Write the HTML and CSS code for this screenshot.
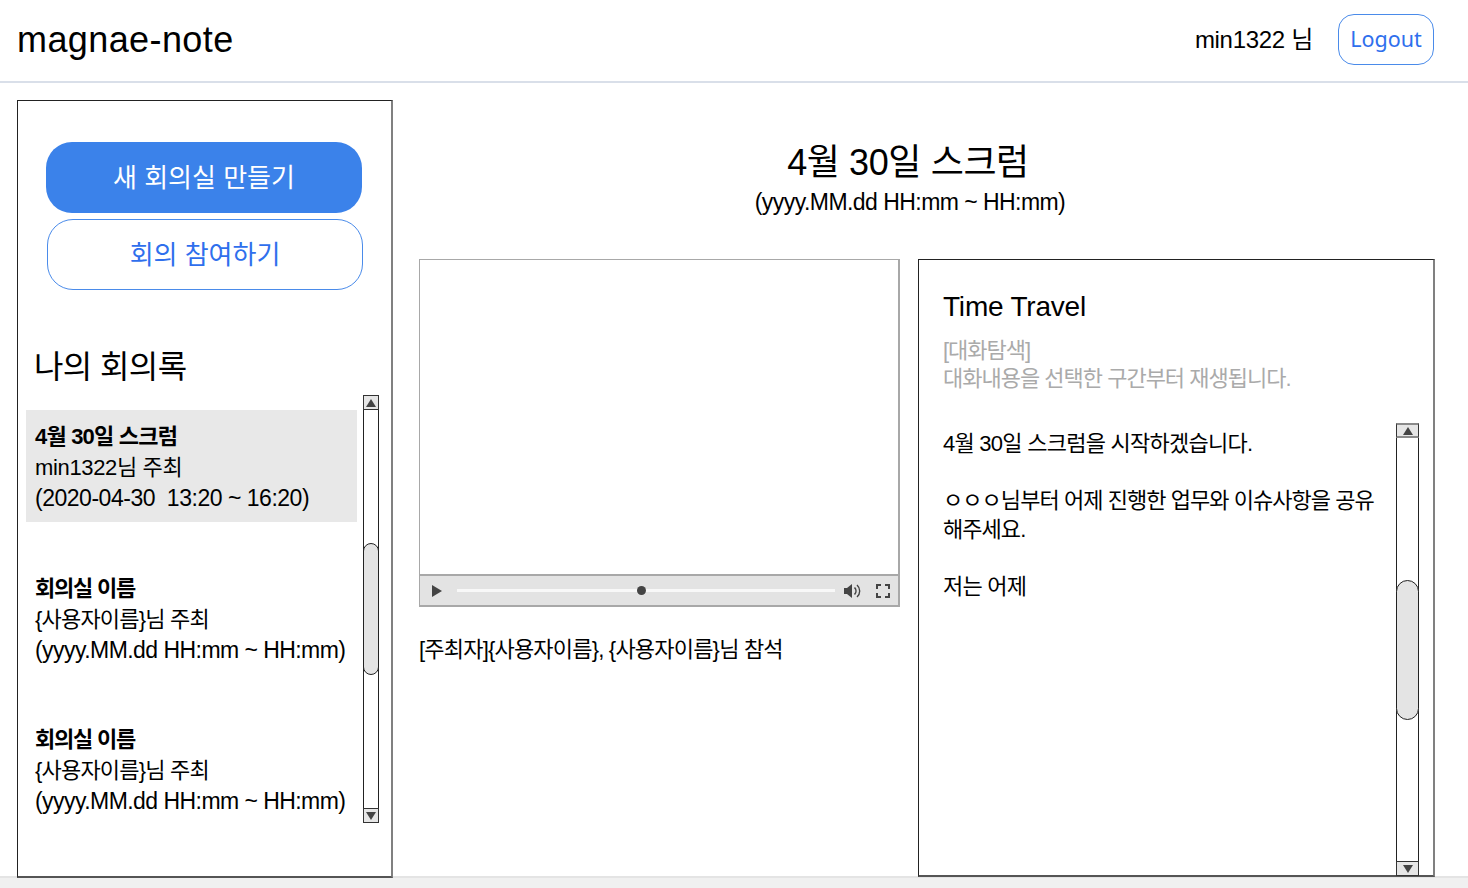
FILE: index.html
```html
<!DOCTYPE html>
<html lang="ko">
<head>
    <meta charset="UTF-8">
    <meta name="viewport" content="width=device-width, initial-scale=1.0">
    <title>magnae-note</title>
    <link rel="stylesheet" href="styles.css">
</head>
<body>
    <header class="topbar">
        <h1 class="logo">magnae-note</h1>
        <div class="user-box">
            <span class="user-name">min1322 님</span>
            <button class="logout-btn">Logout</button>
        </div>
    </header>
    <div class="page">
        <aside class="sidebar">
            <button class="btn btn-primary">새 회의실 만들기</button>
            <button class="btn btn-outline">회의 참여하기</button>
            <h2 class="side-title">나의 회의록</h2>
            <div class="list-wrap">
                <ul class="meeting-list">
                    <li class="meeting active">
                        <strong>4월 30일 스크럼</strong>
                        <span class="host">min1322님 주최</span>
                        <span>(2020-04-30&nbsp; 13:20 ~ 16:20)</span>
                    </li>
                    <li class="meeting">
                        <strong>회의실 이름</strong>
                        <span class="host">{사용자이름}님 주최</span>
                        <span>(yyyy.MM.dd HH:mm ~ HH:mm)</span>
                    </li>
                    <li class="meeting">
                        <strong>회의실 이름</strong>
                        <span class="host">{사용자이름}님 주최</span>
                        <span>(yyyy.MM.dd HH:mm ~ HH:mm)</span>
                    </li>
                </ul>
                <div class="scrollbar scrollbar-list">
                    <div class="arrow arrow-up"><i></i></div>
                    <div class="track"><div class="thumb"></div></div>
                    <div class="arrow arrow-down"><i></i></div>
                </div>
            </div>
        </aside>
        <main class="content">
            <div class="meeting-head">
                <h2>4월 30일 스크럼</h2>
                <p>(yyyy.MM.dd HH:mm ~ HH:mm)</p>
            </div>
            <div class="columns">
                <section class="video-col">
                    <div class="player">
                        <div class="screen"></div>
                        <div class="controls">
                            <svg class="ctl-play" width="12" height="14" viewBox="0 0 12 14"><path d="M1 1l10 6-10 6z" fill="#444"/></svg>
                            <div class="seek"><div class="seek-dot"></div></div>
                            <svg class="ctl-vol" width="19" height="16" viewBox="0 0 19 16"><path d="M1 5h3l5-4v14l-5-4H1z" fill="#444"/><path d="M11.5 4.5a5 5 0 0 1 0 7" fill="none" stroke="#444" stroke-width="1.6"/><path d="M14 2a8 8 0 0 1 0 12" fill="none" stroke="#444" stroke-width="1.4"/></svg>
                            <svg class="ctl-full" width="14" height="14" viewBox="0 0 14 14"><path d="M1 5V1h4M9 1h4v4M13 9v4H9M5 13H1V9" fill="none" stroke="#444" stroke-width="2"/></svg>
                        </div>
                    </div>
                    <p class="attendees">[주최자]{사용자이름}, {사용자이름}님 참석</p>
                </section>
                <section class="travel">
                    <h3>Time Travel</h3>
                    <p class="hint">[대화탐색]<br>대화내용을 선택한 구간부터 재생됩니다.</p>
                    <div class="script-wrap">
                        <div class="script">
                            <p>4월 30일 스크럼을 시작하겠습니다.</p>
                            <p class="long">ㅇㅇㅇ님부터 어제 진행한 업무와 이슈사항을 공유<br>해주세요.</p>
                            <p>저는 어제</p>
                        </div>
                        <div class="scrollbar scrollbar-script">
                            <div class="arrow arrow-up"><i></i></div>
                            <div class="track"><div class="thumb"></div></div>
                            <div class="arrow arrow-down"><i></i></div>
                        </div>
                    </div>
                </section>
            </div>
        </main>
    </div>
</body>
</html>
```

FILE: styles.css
```css
* {
    box-sizing: border-box;
}

html, body {
    height: 100%;
}

body {
    margin: 0;
    font-family: "Liberation Sans", "Noto Sans CJK KR", sans-serif;
    background: #f0f0f0;
    color: #000;
    overflow: hidden;
}

button {
    font-family: inherit;
    cursor: pointer;
}

h1, h2, h3, p, ul {
    margin: 0;
    padding: 0;
    font-weight: 400;
}

.topbar {
    height: 83px;
    padding: 0 34px 2px 17px;
    display: flex;
    align-items: center;
    justify-content: space-between;
    background: #fff;
    border-bottom: 2px solid #d9dfe9;
}

.logo {
    font-size: 36px;
    letter-spacing: 0.4px;
}

.user-box {
    display: flex;
    align-items: center;
    gap: 25px;
}

.user-name {
    padding-bottom: 4px;
    font-size: 24px;
    letter-spacing: -0.3px;
}

.logout-btn {
    width: 96px;
    height: 51px;
    padding: 0 0 2px;
    font-family: "Noto Sans", sans-serif;
    font-size: 21.5px;
    color: #2f6fed;
    background: #fff;
    border: 1px solid #4a8bea;
    border-radius: 16px;
}

.page {
    height: 795px;
    padding: 17px 34px 0 17px;
    display: flex;
    background: #fff;
    border-bottom: 2px solid #e4e4e4;
}

.sidebar {
    width: 376px;
    height: 778px;
    padding: 41px 0 0;
    border: 1px solid #222;
    border-right: 2px solid #808080;
    border-bottom: 2px solid #555;
    flex-shrink: 0;
}

.btn {
    display: block;
    width: 316px;
    height: 71px;
    font-size: 26px;
    border-radius: 26px;
}

.btn-primary {
    margin-left: 28px;
    padding-bottom: 5px;
    color: #fff;
    background: #3b82ea;
    border: none;
}

.btn-outline {
    margin: 6px 0 0 29px;
    padding-bottom: 6px;
    color: #2f6fed;
    background: #fff;
    border: 1px solid #4a8bea;
}

.side-title {
    margin: 54px 0 0 16px;
    font-size: 32px;
    line-height: 46px;
    letter-spacing: -0.6px;
}

.list-wrap {
    display: flex;
    margin-top: 5px;
    padding-left: 8px;
}

.meeting-list {
    width: 331px;
    list-style: none;
    padding-top: 15px;
}

.meeting {
    height: 112px;
    margin-bottom: 39.5px;
    padding: 11px 0 0 9px;
    font-size: 23px;
    line-height: 31px;
    letter-spacing: -0.55px;
    white-space: nowrap;
}

.meeting strong,
.meeting span {
    display: block;
}

.meeting strong {
    font-size: 22px;
    letter-spacing: -1.2px;
}

.meeting .host {
    font-size: 22px;
    letter-spacing: -0.8px;
}

.meeting.active {
    background: #e8e8e8;
    letter-spacing: -0.48px;
}

.meeting.active strong {
    letter-spacing: -0.8px;
}

.meeting.active .host {
    letter-spacing: -0.35px;
}

.scrollbar {
    display: flex;
    flex-direction: column;
    flex-shrink: 0;
    border-left: 1px solid #222;
    border-right: 1px solid #222;
}

.scrollbar-list {
    width: 16px;
    height: 428px;
    margin-left: 6px;
}

.scrollbar-script {
    width: 23px;
    height: 453px;
    margin-left: 14px;
}

.arrow {
    height: 15px;
    display: flex;
    align-items: center;
    justify-content: center;
    background: #e6e6e6;
    border: 1px solid #333;
    margin: 0 -1px;
    flex-shrink: 0;
}

.arrow i {
    width: 0;
    height: 0;
    border-left: 5px solid transparent;
    border-right: 5px solid transparent;
}

.arrow-up i {
    border-bottom: 8px solid #444;
}

.arrow-down i {
    border-top: 8px solid #444;
}

.scrollbar-script .arrow-up {
    border-top: 2px solid #8a8a8a;
    border-bottom: 2px solid #8a8a8a;
}

.track {
    flex-grow: 1;
    background: #fff;
}

.thumb {
    background: #e4e4e4;
    border: 1px solid #222;
    margin: 0 -1px;
}

.scrollbar-list .thumb {
    height: 132px;
    margin-top: 133px;
    border-radius: 8px;
}

.scrollbar-script .thumb {
    height: 140px;
    margin-top: 142px;
    border-radius: 12px;
}

.content {
    flex-grow: 1;
    padding: 0 0 0 26px;
}

.meeting-head {
    height: 159px;
    padding: 41px 38px 0 0;
    text-align: center;
}

.meeting-head h2 {
    font-size: 36px;
    line-height: 44px;
    letter-spacing: -0.4px;
}

.meeting-head p {
    margin-top: 2px;
    padding-left: 4px;
    font-size: 23px;
    line-height: 30px;
    letter-spacing: -0.55px;
}

.columns {
    display: flex;
    gap: 18px;
}

.video-col {
    width: 481px;
    flex-shrink: 0;
}

.player {
    height: 348px;
    display: flex;
    flex-direction: column;
    border: 1px solid #a8a8a8;
    border-width: 1px 2px 2px 1px;
}

.screen {
    flex-grow: 1;
    background: #fff;
}

.controls {
    height: 31px;
    padding: 0 7px 0 11px;
    display: flex;
    align-items: center;
    background: #e3e3e3;
    border-top: 2px solid #a8a8a8;
}

.seek {
    width: 378px;
    height: 3px;
    margin: 0 8px 0 14px;
    display: flex;
    align-items: center;
    padding-left: 180px;
    background: #f8f8f8;
}

.seek-dot {
    width: 9px;
    height: 9px;
    border-radius: 50%;
    background: #444;
}

.ctl-full {
    margin-left: 14px;
}

.attendees {
    margin-top: 27px;
    font-size: 22px;
    line-height: 32px;
    letter-spacing: -0.8px;
}

.travel {
    width: 517px;
    height: 618px;
    padding: 27px 0 0 24px;
    border: 1px solid #222;
    border-right: 2px solid #808080;
    border-bottom: 2px solid #555;
}

.travel h3 {
    font-size: 28px;
    line-height: 40px;
    letter-spacing: -0.2px;
}

.hint {
    margin-top: 10px;
    font-size: 22px;
    line-height: 28px;
    color: #aaa;
    letter-spacing: -1px;
}

.script-wrap {
    display: flex;
    margin-top: 30px;
}

.script {
    width: 439px;
    padding-top: 6px;
    font-size: 22px;
    line-height: 29px;
    letter-spacing: -0.75px;
}

.script p {
    margin-bottom: 28px;
}

.script .long {
    letter-spacing: -0.95px;
}
```
